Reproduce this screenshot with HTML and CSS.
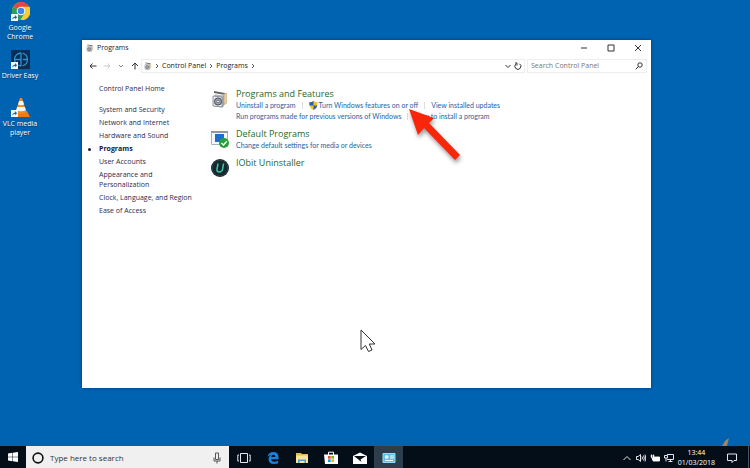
FILE: index.html
```html
<!DOCTYPE html>
<html lang="en">
<head>
    <meta charset="UTF-8">
    <meta name="viewport" content="width=device-width, initial-scale=1.0">
    <title>Programs</title>
    <link rel="stylesheet" href="styles.css">
</head>
<body>
    <!-- Shared icons -->
    <svg class="sprite" aria-hidden="true">
        <symbol id="programs" viewBox="0 0 18 18">
            <path d="M3 1l11 2v2L3 3z" fill="#666"/>
            <path d="M12 4l4-1v10l-4 3z" fill="#c9a67c"/>
            <path d="M13.500 4.500l2-.5v8.500l-2 1.500z" fill="#e8d3ae"/>
            <path d="M4 5l8 1v11l-8-1z" fill="#d5d9df" stroke="#8b9099" stroke-width=".7"/>
            <path d="M2 6l9 1v10l-9-1z" fill="#eef1f4" stroke="#777c85" stroke-width=".8"/>
            <circle cx="7" cy="11.500" r="3.600" fill="#9aa1ad" stroke="#454b56" stroke-width="1"/>
            <circle cx="7" cy="11.500" r="1.200" fill="#fff" stroke="#444" stroke-width=".6"/>
        </symbol>
        <symbol id="shortcut" viewBox="0 0 8 8">
            <path d="M0 0h8v8H0z" fill="#f5f8fb"/>
            <path d="M1.500 7c0-3 1-4 3-4V1.200L7 3.600 4.500 6V4.500C3 4.500 2 5 1.500 7z" fill="#1d64b4"/>
        </symbol>
    </svg>

    <main class="desktop">
        <nav class="shortcuts" aria-label="Desktop">
            <a href="#" class="shortcut">
                <svg class="shortcut-icon" viewBox="0 0 20 20">
                    <circle cx="11" cy="9" r="9" fill="#f5c826"/>
                    <path d="M11 9L3.200 4.500A9 9 0 0 1 18.800 4.500z" fill="#dd4b3e"/>
                    <path d="M11 9L3.200 4.500A9 9 0 0 0 10.500 18L15 11z" fill="#2f9e57"/>
                    <path d="M11 4.800h8.500a9 9 0 0 1-9 13.200l4.200-7z" fill="#f8cd32"/>
                    <circle cx="11" cy="9" r="4.300" fill="#fff"/>
                    <circle cx="11" cy="9" r="3.300" fill="#4285e8"/>
                    <use href="#shortcut" x="1" y="12" width="7" height="7"/>
                </svg>
                <span>Google Chrome</span>
            </a>
            <a href="#" class="shortcut">
                <svg class="shortcut-icon" viewBox="0 0 20 20">
                    <path d="M1 0h19v19H1z" fill="#0a2c55"/>
                    <path d="M11 3a6.500 6.500 0 1 0 0 13M11 3v13M5 9.500h6M12.500 3.200a6.500 6.500 0 0 1 0 12.600M13 9.500h5" fill="none" stroke="#2795cf" stroke-width="1.300"/>
                    <use href="#shortcut" x="1" y="12" width="7" height="7"/>
                </svg>
                <span>Driver Easy</span>
            </a>
            <a href="#" class="shortcut">
                <svg class="shortcut-icon" viewBox="0 0 20 20">
                    <path d="M5 13h12l3 6H2z" fill="#ee7b16"/>
                    <path d="M10 0h2l4.500 14q-5.500 3-11 0z" fill="#f38a20"/>
                    <path d="M9.200 3h3.700l1.200 3.500q-3.100 1.300-6.100 0zM7.200 9h7.700l1 3.200q-5 2.200-9.800 0z" fill="#f4f4f1"/>
                    <use href="#shortcut" x="1" y="12" width="7" height="7"/>
                </svg>
                <span>VLC media player</span>
            </a>
        </nav>

        <section class="window">
            <header class="titlebar">
                <svg class="small-icon" viewBox="0 0 18 18"><use href="#programs"/></svg>
                <h1>Programs</h1>
                <div class="window-buttons">
                    <button aria-label="Minimize"><svg viewBox="0 0 8 8"><path d="M1 4h6"/></svg></button>
                    <button aria-label="Maximize"><svg viewBox="0 0 8 8"><path d="M1 1h6v6H1z"/></svg></button>
                    <button aria-label="Close"><svg viewBox="0 0 8 8"><path d="M1 1l6 6M7 1L1 7"/></svg></button>
                </div>
            </header>

            <div class="toolbar">
                <div class="history">
                    <button aria-label="Back"><svg viewBox="0 0 8 8"><path d="M7.500 4H1M3.500 1.500L1 4l2.500 2.500"/></svg></button>
                    <button aria-label="Forward" disabled><svg viewBox="0 0 8 8"><path d="M.5 4H7M4.500 1.500L7 4 4.500 6.500"/></svg></button>
                    <button class="recent" aria-label="Recent locations"><svg viewBox="0 0 8 8"><path d="M2 3l2 2 2-2"/></svg></button>
                    <button aria-label="Up"><svg viewBox="0 0 8 8"><path d="M4 7.500V1M1 4l3-3 3 3"/></svg></button>
                </div>
                <div class="address">
                    <svg class="small-icon" viewBox="0 0 18 18"><use href="#programs"/></svg>
                    <svg class="chevron" viewBox="0 0 6 6"><path d="M2 1l2 2-2 2"/></svg>
                    <a href="#">Control Panel</a>
                    <svg class="chevron" viewBox="0 0 6 6"><path d="M2 1l2 2-2 2"/></svg>
                    <a href="#">Programs</a>
                    <svg class="chevron" viewBox="0 0 6 6"><path d="M2 1l2 2-2 2"/></svg>
                    <div class="address-buttons">
                        <button aria-label="Previous locations"><svg viewBox="0 0 8 8"><path d="M1.500 3L4 5.500 6.500 3"/></svg></button>
                        <button aria-label="Refresh"><svg viewBox="0 0 8 8"><path d="M5.500 1.800A3 3 0 1 1 2 2M1 1h2v2.500"/></svg></button>
                    </div>
                </div>
                <label class="search">
                    <input type="text" placeholder="Search Control Panel" aria-label="Search Control Panel">
                    <svg viewBox="0 0 8 8"><circle cx="5" cy="3" r="2.200"/><path d="M3.500 4.500L.7 7.300"/></svg>
                </label>
            </div>

            <div class="content">
                <nav class="sidebar" aria-label="Categories">
                    <a href="#" class="home">Control Panel Home</a>
                    <a href="#">System and Security</a>
                    <a href="#">Network and Internet</a>
                    <a href="#">Hardware and Sound</a>
                    <a href="#" class="current" aria-current="page">Programs</a>
                    <a href="#">User Accounts</a>
                    <a href="#">Appearance and<br>Personalization</a>
                    <a href="#">Clock, Language, and Region</a>
                    <a href="#">Ease of Access</a>
                </nav>

                <div class="categories">
                    <article class="category">
                        <svg class="category-icon" viewBox="0 0 18 18"><use href="#programs"/></svg>
                        <div>
                            <h2><a href="#">Programs and Features</a></h2>
                            <ul class="tasks">
                                <li><a href="#">Uninstall a program</a></li>
                                <li>
                                    <a href="#" class="admin">
                                        <svg viewBox="0 0 10 10">
                                            <path d="M5 0q2 1.300 4.500 1.300Q10 8 5 10 0 8 .5 1.300 3 1.300 5 0z" fill="#f2c230"/>
                                            <path d="M5 0v5H.5Q.3 3 .5 1.300 3 1.300 5 0zM5 5h4.300Q8.500 8.700 5 10z" fill="#2a63a8"/>
                                        </svg>
                                        Turn Windows features on or off
                                    </a>
                                </li>
                                <li><a href="#">View installed updates</a></li>
                            </ul>
                            <ul class="tasks">
                                <li><a href="#">Run programs made for previous versions of Windows</a></li>
                                <li><a href="#">How to install a program</a></li>
                            </ul>
                        </div>
                    </article>
                    <article class="category">
                        <svg class="category-icon" viewBox="0 0 18 18">
                            <path d="M.5 1.500h16v13H.5z" fill="#f4f6f8" stroke="#aab2ba"/>
                            <path d="M0 1h17v2H0z" fill="#8f9aa5"/>
                            <path d="M4 4h9v8H4z" fill="#1a6fd0"/>
                            <circle cx="13" cy="13" r="5" fill="#28a03a"/>
                            <path d="M10.500 13l2 2 3.300-3.800" fill="none" stroke="#fff" stroke-width="1.300"/>
                        </svg>
                        <div>
                            <h2><a href="#">Default Programs</a></h2>
                            <ul class="tasks">
                                <li><a href="#">Change default settings for media or devices</a></li>
                            </ul>
                        </div>
                    </article>
                    <article class="category">
                        <svg class="category-icon" viewBox="0 0 18 18">
                            <circle cx="9" cy="9" r="9" fill="#17272e"/>
                            <circle cx="9" cy="9" r="7.800" fill="none" stroke="#29494c" stroke-width=".8"/>
                            <path d="M7 4.500L6 10q-.4 3 2.300 3t3.300-2.800l1-5.700" fill="none" stroke="#35c9a6" stroke-width="1.500"/>
                        </svg>
                        <h2><a href="#">IObit Uninstaller</a></h2>
                    </article>
                </div>
            </div>
        </section>

        <svg class="pointer-arrow" viewBox="0 0 56 58" aria-hidden="true">
            <path d="M2 2l25 9-5 5 31 32-5 5-31-32-6 7z" fill="#f9260a"/>
        </svg>
        <svg class="cursor" viewBox="0 0 16 24" aria-hidden="true">
            <path d="M1 1v19.500l4.500-4 3 6 3.500-1.500-2.700-6h5.700z" fill="#fff" stroke="#333" stroke-width="1"/>
        </svg>
        <svg class="mark" viewBox="0 0 8 8" aria-hidden="true">
            <path d="M0 8l3-5 4-3-2 8z" fill="#a08268"/>
        </svg>
    </main>

    <footer class="taskbar">
        <button class="start" aria-label="Start">
            <svg viewBox="0 0 10 10"><path d="M0 1.500l4.500-.7v4H0zM5 .7L10 0v4.800H5zM0 5.300h4.500v4L0 8.600zM5 5.300h5V10l-5-.7z" fill="#fff"/></svg>
        </button>
        <label class="taskbar-search">
            <svg viewBox="0 0 12 12"><circle cx="6" cy="6" r="4.900" fill="none" stroke="#111" stroke-width="1.600"/></svg>
            <input type="text" placeholder="Type here to search" aria-label="Type here to search">
            <svg class="mic" viewBox="0 0 8 12"><path d="M2.500 1h3v6.500h-3zM1 5.500V9h6V5.500M4 9v2.500" fill="none" stroke="#444" stroke-width=".9"/></svg>
        </label>
        <div class="apps">
            <button aria-label="Task View"><svg viewBox="0 0 14 14"><path d="M3.500 2.500h7v9h-7zM2 4H.8v6H2M12 4h1.200v6H12" fill="none" stroke="#e6eaee"/></svg></button>
            <button aria-label="Edge"><svg viewBox="0 0 14 14"><path d="M1.500 6Q2.500 1 7.500 1q5 0 5 5.500v1.700H5.200q.3 2.500 3.300 2.500 2 0 3.600-1v2.500Q10.500 13 8 13q-5.500 0-5.500-5 0-2.500 2.500-4Q2.700 4.300 1.500 6zm3.800 0H9.500q0-2.200-2-2.200T5.300 6z" fill="#1683e0"/></svg></button>
            <button aria-label="File Explorer"><svg viewBox="0 0 14 14"><path d="M1 2h5l1 1h6v9H1z" fill="#e6b94b"/><path d="M1 4.500h12V12H1z" fill="#fbe49a"/><path d="M3 12V8.500h8V12H9.500v-2h-5v2z" fill="#3fa3dd"/></svg></button>
            <button aria-label="Store"><svg viewBox="0 0 14 14"><path d="M4.500 4V1.200h5V4" fill="none" stroke="#fff"/><path d="M0 3.500h14V13H1z" fill="#fff"/><path d="M4 5h2.700v2.700H4z" fill="#e9502a"/><path d="M7.300 5H10v2.700H7.300z" fill="#79b51c"/><path d="M4 8.300h2.700V11H4z" fill="#159fe0"/><path d="M7.300 8.300H10V11H7.300z" fill="#f4b40c"/></svg></button>
            <button aria-label="Mail"><svg viewBox="0 0 14 14"><path d="M0 5l7-3.500L14 5v8H0z" fill="#fff"/><path d="M1 5h12L7.500 8.500 8.500 11z" fill="#050f18"/></svg></button>
            <button class="active" aria-label="Control Panel"><svg viewBox="0 0 14 14"><path d="M1 2.500h12v9H1z" fill="#56bdf0" stroke="#9bdcf8"/><circle cx="4.700" cy="6" r="2" fill="#d9f3ff"/><path d="M8 5h4M8 7h4M3 9.500h8" stroke="#fff"/></svg></button>
        </div>
        <div class="tray">
            <button aria-label="Show hidden icons"><svg viewBox="0 0 10 10"><path d="M1.500 7L5 3.500 8.500 7"/></svg></button>
            <button aria-label="Volume"><svg viewBox="0 0 10 10"><path d="M.5 3.500h1.700L4.500 1.500v7L2.200 6.500H.5zM6 3.500q1 1.500 0 3M7.500 2.500q1.700 2.500 0 5M9 1.500q1.500 3.500 0 7"/></svg></button>
            <button aria-label="Battery"><svg viewBox="0 0 10 10"><path d="M3 4h6.500v4H3z" fill="#fff"/><path d="M.5 3h4M1.500 1.500V5h2V1.500M2.500 5v2"/></svg></button>
            <button aria-label="Network"><svg viewBox="0 0 10 10"><path d="M3 1.500h6.500v5H3M6.500 6.500v2M4.500 8.500h4M.5 2.500h3V5h-3zM2 5v3.500"/></svg></button>
            <button class="clock"><time>13:44</time><span>01/03/2018</span></button>
            <button class="notifications" aria-label="Notifications"><svg viewBox="0 0 10 10"><path d="M.5 1h9v6.500H7L5 9.500V7.500H.5z"/></svg></button>
        </div>
        <button class="show-desktop" aria-label="Show desktop"></button>
    </footer>
</body>
</html>
```

FILE: styles.css
```css
* {
    margin: 0;
    padding: 0;
    box-sizing: border-box;
}
body {
    height: 100vh;
    display: flex;
    flex-direction: column;
    overflow: hidden;
    background-color: #0063b1;
    font-family: 'Open Sans', 'Noto Sans', sans-serif;
    font-size: 7px;
    line-height: 10px;
    color: #222;
}
a {
    color: inherit;
    text-decoration: none;
}
button, input {
    border: none;
    background: none;
    font: inherit;
    color: inherit;
}
svg {
    display: block;
    flex-shrink: 0;
}
ul {
    list-style: none;
}
.sprite {
    position: absolute;
    width: 0;
    height: 0;
}

/* Desktop */
.desktop {
    position: relative;
    flex: 1;
}
.shortcuts {
    width: 40px;
    padding-top: 2px;
    display: flex;
    flex-direction: column;
    gap: 9px;
}
.shortcut {
    display: flex;
    flex-direction: column;
    align-items: center;
    gap: 1px;
    min-height: 39px;
    color: #fff;
    line-height: 9px;
    text-align: center;
    text-shadow: 0 1px 1px #003b70;
}
.shortcut-icon {
    width: 20px;
    height: 20px;
}

/* Window */
.window {
    position: absolute;
    top: 40px;
    right: 99px;
    bottom: 58px;
    left: 82px;
    background-color: #fff;
    box-shadow: 0 0 3px #00366b;
}
.small-icon {
    width: 8px;
    height: 8px;
}
.titlebar {
    display: flex;
    align-items: center;
    gap: 3px;
    height: 16px;
    padding-left: 4px;
}
.titlebar h1 {
    font-size: 7px;
    font-weight: normal;
}
.window-buttons {
    display: flex;
    margin-left: auto;
}
.window-buttons button {
    display: flex;
    justify-content: center;
    width: 27px;
}
.window-buttons svg, .toolbar button svg, .search svg {
    width: 8px;
    height: 8px;
    fill: none;
    stroke: #333;
}
.toolbar {
    display: flex;
    align-items: center;
    gap: 2px;
    height: 20px;
    padding: 0 4px 0 7px;
}
.history {
    display: flex;
    gap: 6px;
}
.history button:disabled svg {
    stroke: #ccc;
}
.history .recent svg {
    stroke: #888;
}
.address {
    flex: 1;
    display: flex;
    align-items: center;
    gap: 2px;
    height: 14px;
    padding: 0 2px;
    border: 1px solid #eee;
}
.chevron {
    width: 6px;
    height: 6px;
    fill: none;
    stroke: #555;
}
.address-buttons {
    display: flex;
    gap: 2px;
    margin-left: auto;
}
.search {
    display: flex;
    align-items: center;
    width: 120px;
    height: 14px;
    padding: 0 3px;
    border: 1px solid #eee;
}
.search input, .taskbar-search input {
    flex: 1;
    min-width: 0;
    outline: none;
}
.search input::placeholder {
    color: #777;
}

/* Content */
.content {
    display: flex;
    padding: 8px 17px;
}
.sidebar {
    width: 112px;
    display: flex;
    flex-direction: column;
    gap: 3px;
    color: #2c2c4e;
}
.sidebar .home {
    margin-bottom: 8px;
}
.sidebar .current {
    position: relative;
    font-weight: bold;
    color: #151547;
}
.sidebar .current::before {
    content: "";
    position: absolute;
    top: 4px;
    left: -11px;
    width: 3px;
    height: 3px;
    border-radius: 50%;
    background-color: #151547;
}
.categories {
    flex: 1;
    display: flex;
    flex-direction: column;
    gap: 6px;
    padding-top: 4px;
}
.category {
    display: flex;
    gap: 7px;
}
.category h2 {
    font-size: 9px;
    line-height: 12px;
    font-weight: normal;
    color: #1d6b24;
}
.category-icon {
    width: 18px;
    height: 18px;
    margin-top: 2px;
}
.tasks {
    display: flex;
    font-family: Lato, 'Open Sans', sans-serif;
    line-height: 11px;
    color: #1f619f;
}
.tasks li + li {
    display: flex;
    align-items: center;
}
.tasks li + li::before {
    content: "";
    width: 1px;
    height: 7px;
    margin: 0 6px;
    background-color: #ddd;
}
.admin {
    display: flex;
    align-items: center;
    gap: 1px;
}
.admin svg {
    width: 9px;
    height: 9px;
}

/* Overlays */
.pointer-arrow {
    position: absolute;
    top: 107px;
    left: 407px;
    width: 56px;
    height: 58px;
    filter: drop-shadow(1px 3px 2px #0006);
}
.cursor {
    position: absolute;
    top: 329px;
    left: 360px;
    width: 16px;
    height: 24px;
}
.mark {
    position: absolute;
    right: 20px;
    bottom: 0;
    width: 8px;
    height: 8px;
}

/* Taskbar */
.taskbar {
    display: flex;
    height: 22px;
    background-color: #030e19;
    color: #fff;
}
.taskbar button {
    display: flex;
    align-items: center;
    justify-content: center;
}
.start {
    width: 26px;
}
.start svg {
    width: 10px;
    height: 10px;
}
.taskbar-search {
    display: flex;
    align-items: center;
    gap: 6px;
    width: 203px;
    padding: 2px 8px 0 6px;
    background-color: #f0f0f0;
    font-size: 8px;
}
.taskbar-search svg {
    width: 12px;
    height: 12px;
}
.taskbar-search .mic {
    width: 8px;
}
.taskbar-search input::placeholder {
    color: #333;
}
.apps {
    display: flex;
}
.apps button {
    width: 29px;
    padding-top: 2px;
}
.apps svg {
    width: 14px;
    height: 14px;
}
.apps .active {
    background-color: #2d3d4b;
}
.tray {
    display: flex;
    gap: 4px;
    margin-left: auto;
    padding: 2px 11px 0 0;
}
.tray svg {
    width: 10px;
    height: 10px;
    fill: none;
    stroke: #fff;
    stroke-width: .9;
}
.tray .clock {
    flex-direction: column;
}
.tray .notifications {
    margin-left: 8px;
}
.taskbar .show-desktop {
    width: 2px;
    border-left: 1px solid #46525e;
}
```
